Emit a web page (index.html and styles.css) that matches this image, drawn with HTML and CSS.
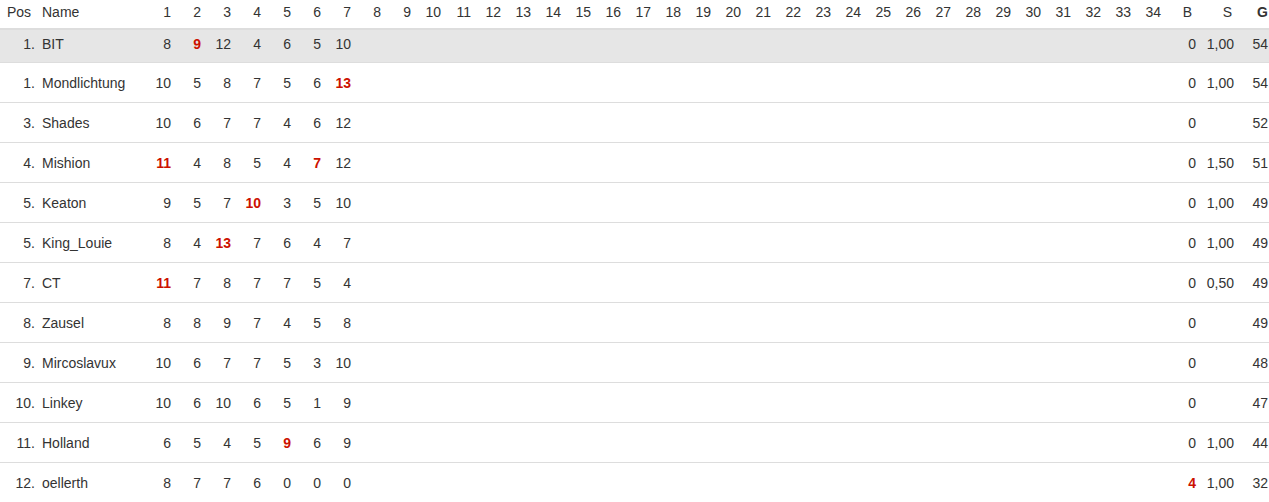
FILE: index.html
```html
<!DOCTYPE html>
<html>
<head>
<meta charset="utf-8">
<link rel="stylesheet" href="styles.css">
</head>
<body>
<table class="standings">
<colgroup>
<col class="c-pos"><col class="c-name">
<col class="c-r"><col class="c-r"><col class="c-r"><col class="c-r"><col class="c-r"><col class="c-r"><col class="c-r"><col class="c-r"><col class="c-r"><col class="c-r">
<col class="c-r"><col class="c-r"><col class="c-r"><col class="c-r"><col class="c-r"><col class="c-r"><col class="c-r"><col class="c-r"><col class="c-r"><col class="c-r">
<col class="c-r"><col class="c-r"><col class="c-r"><col class="c-r"><col class="c-r"><col class="c-r"><col class="c-r"><col class="c-r"><col class="c-r"><col class="c-r">
<col class="c-r"><col class="c-r"><col class="c-r"><col class="c-r">
<col class="c-b"><col class="c-s"><col class="c-g">
</colgroup>
<thead>
<tr>
<th class="pos-h">Pos</th><th class="name">Name</th>
<th>1</th><th>2</th><th>3</th><th>4</th><th>5</th><th>6</th><th>7</th><th>8</th><th>9</th><th>10</th>
<th>11</th><th>12</th><th>13</th><th>14</th><th>15</th><th>16</th><th>17</th><th>18</th><th>19</th><th>20</th>
<th>21</th><th>22</th><th>23</th><th>24</th><th>25</th><th>26</th><th>27</th><th>28</th><th>29</th><th>30</th>
<th>31</th><th>32</th><th>33</th><th>34</th>
<th class="b-h">B</th><th class="s-h">S</th><th class="g-h">G</th>
</tr>
</thead>
<tbody id="rows"></tbody>
</table>
<script src="app.js"></script>
</body>
</html>
```
FILE: app.js
```js
var data = [
  ["1.", "BIT", [8, "*9", 12, 4, 6, 5, 10], "0", "1,00", "54", true],
  ["1.", "Mondlichtung", [10, 5, 8, 7, 5, 6, "*13"], "0", "1,00", "54"],
  ["3.", "Shades", [10, 6, 7, 7, 4, 6, 12], "0", "", "52"],
  ["4.", "Mishion", ["*11", 4, 8, 5, 4, "*7", 12], "0", "1,50", "51"],
  ["5.", "Keaton", [9, 5, 7, "*10", 3, 5, 10], "0", "1,00", "49"],
  ["5.", "King_Louie", [8, 4, "*13", 7, 6, 4, 7], "0", "1,00", "49"],
  ["7.", "CT", ["*11", 7, 8, 7, 7, 5, 4], "0", "0,50", "49"],
  ["8.", "Zausel", [8, 8, 9, 7, 4, 5, 8], "0", "", "49"],
  ["9.", "Mircoslavux", [10, 6, 7, 7, 5, 3, 10], "0", "", "48"],
  ["10.", "Linkey", [10, 6, 10, 6, 5, 1, 9], "0", "", "47"],
  ["11.", "Holland", [6, 5, 4, 5, "*9", 6, 9], "0", "1,00", "44"],
  ["12.", "oellerth", [8, 7, 7, 6, 0, 0, 0], "*4", "1,00", "32"]
];
function cell(v, cls) {
  var s = String(v);
  var td = document.createElement("td");
  if (cls) td.className = cls;
  if (s.charAt(0) === "*") {
    var b = document.createElement("span");
    b.className = "best";
    b.textContent = s.slice(1);
    td.appendChild(b);
  } else {
    td.textContent = s;
  }
  return td;
}
var tb = document.getElementById("rows");
data.forEach(function (r) {
  var tr = document.createElement("tr");
  if (r[6]) tr.className = "me";
  tr.appendChild(cell(r[0], "pos"));
  tr.appendChild(cell(r[1], "name"));
  for (var i = 0; i < 34; i++) {
    tr.appendChild(cell(i < r[2].length ? r[2][i] : ""));
  }
  tr.appendChild(cell(r[3], "b"));
  tr.appendChild(cell(r[4], "s"));
  tr.appendChild(cell(r[5], "g"));
  tb.appendChild(tr);
});
```
FILE: styles.css
```css
html, body {
  margin: 0;
  padding: 0;
  background: #fff;
}
body {
  font-family: "Liberation Sans", Arial, sans-serif;
  font-size: 14px;
  color: #333;
  overflow: hidden;
}
.standings {
  table-layout: fixed;
  border-collapse: collapse;
  width: 1269px;
}
.c-pos { width: 38px; }
.c-name { width: 107px; }
.c-r { width: 30px; }
.c-b { width: 35px; }
.c-s { width: 38px; }
.c-g { width: 31px; }

.standings th,
.standings td {
  padding: 0 4px 0 0;
  text-align: right;
  white-space: nowrap;
  line-height: 16px;
  font-weight: normal;
  box-sizing: content-box;
}
.standings thead th {
  height: 24px;
  padding-top: 4px;
  vertical-align: top;
  border-bottom: 2px solid #dddddd;
}
.standings th.pos-h {
  text-align: left;
  padding-left: 7px;
}
.standings .name {
  text-align: left;
  padding-left: 4px;
  padding-right: 0;
}
.standings th.b-h { padding-right: 8px; }
.standings th.s-h { padding-right: 6px; }
.standings th.g-h,
.standings td.g { padding-right: 1px; }
.standings th.g-h { font-weight: bold; }

.standings td.pos { padding-right: 3px; }

.standings tbody td {
  height: 39px;
  vertical-align: middle;
  border-bottom: 1px solid #dddddd;
}
.standings tbody tr.me td {
  height: 26px;
  padding-top: 6px;
  background: #e6e6e6;
  vertical-align: top;
}
.best {
  color: #cc1100;
  font-weight: bold;
}
```
